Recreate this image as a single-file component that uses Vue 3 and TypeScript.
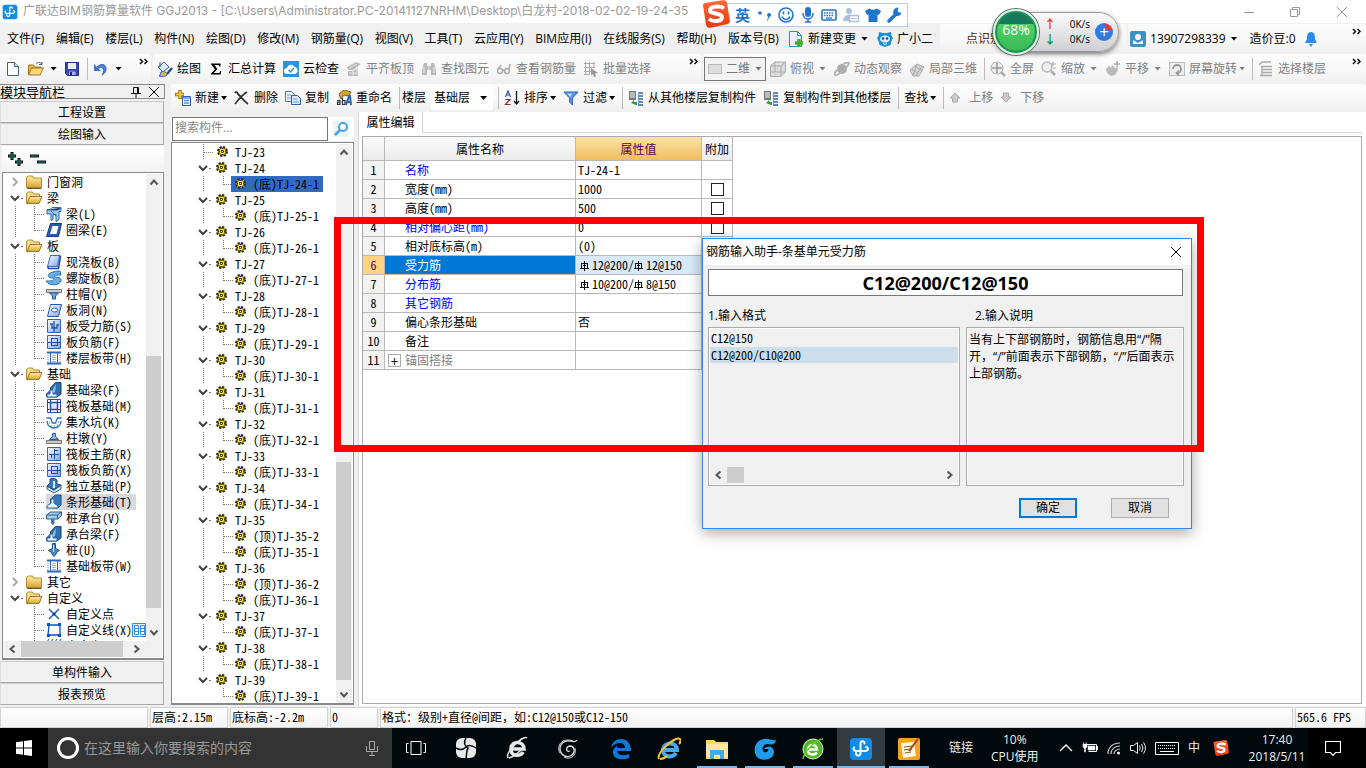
<script setup lang="ts">
import { h, ref } from 'vue'

interface Tool {
  icon?: string
  text?: string
  off?: boolean
  drop?: 'wide' | 'tight'
  sep?: boolean
}
interface NavRow {
  text: string
  guide: string
  icon: string
  branch?: string
  on?: boolean
}
interface PropRow {
  name: string
  value: string
  link?: boolean
  extra?: boolean
}

const Ic = (p: { n: string }) =>
  h('svg', { class: 'ic', 'aria-hidden': 'true' }, [h('use', { href: '#i-' + p.n })])
Ic.props = ['n']

const menus = ['文件(F)', '编辑(E)', '楼层(L)', '构件(N)', '绘图(D)', '修改(M)', '钢筋量(Q)', '视图(V)', '工具(T)', '云应用(Y)', 'BIM应用(I)', '在线服务(S)', '帮助(H)', '版本号(B)']

const editTools: Tool[] = [
  { icon: 'draw', text: '绘图' },
  { icon: 'sum', text: '汇总计算' },
  { icon: 'cloud', text: '云检查' },
  { icon: 'align', text: '平齐板顶', off: true },
  { icon: 'find', text: '查找图元', off: true },
  { icon: 'glasses', text: '查看钢筋量', off: true },
  { icon: 'batch', text: '批量选择', off: true },
]
const viewTools: Tool[] = [
  { icon: 'cube', text: '俯视', off: true, drop: 'wide' },
  { icon: 'orbit', text: '动态观察', off: true },
  { icon: 'part', text: '局部三维', off: true },
  { sep: true },
  { icon: 'full', text: '全屏', off: true },
  { icon: 'zoom', text: '缩放', off: true, drop: 'wide' },
  { icon: 'pan', text: '平移', off: true, drop: 'wide' },
  { icon: 'rotate', text: '屏幕旋转', off: true, drop: 'tight' },
  { sep: true },
  { icon: 'floors', text: '选择楼层', off: true },
]
const partTools: Tool[] = [
  { icon: 'create', text: '新建', drop: 'tight' },
  { icon: 'delete', text: '删除' },
  { icon: 'copy', text: '复制' },
  { icon: 'rename', text: '重命名' },
  { sep: true },
]
const partTools2: Tool[] = [
  { sep: true },
  { icon: 'sort', text: '排序', drop: 'tight' },
  { icon: 'filter', text: '过滤', drop: 'tight' },
  { sep: true },
  { icon: 'from', text: '从其他楼层复制构件' },
  { icon: 'from', text: '复制构件到其他楼层' },
  { sep: true },
  { text: '查找', drop: 'tight' },
  { sep: true },
  { icon: 'up', text: '上移', off: true },
  { icon: 'down', text: '下移', off: true },
]

const group = (text: string, icon = 'open', guide = 'chev'): NavRow => ({ text, icon, guide })
const leaf = (text: string, icon: string, branch = 'tee', guide = 'line', on = false): NavRow => ({ text, icon, branch, guide, on })

const nav: NavRow[] = [
  group('门窗洞', 'folder', 'shut'),
  group('梁'),
  leaf('梁(L)', 'beam'),
  leaf('圈梁(E)', 'ring', 'elbow'),
  group('板'),
  leaf('现浇板(B)', 'slab'),
  leaf('螺旋板(B)', 'spiral'),
  leaf('柱帽(V)', 'cap'),
  leaf('板洞(N)', 'hole'),
  leaf('板受力筋(S)', 'rebarS'),
  leaf('板负筋(F)', 'rebarF'),
  leaf('楼层板带(H)', 'strip', 'elbow'),
  group('基础'),
  leaf('基础梁(F)', 'fbeam'),
  leaf('筏板基础(M)', 'raft'),
  leaf('集水坑(K)', 'pit'),
  leaf('柱墩(Y)', 'pier'),
  leaf('筏板主筋(R)', 'rebarR'),
  leaf('筏板负筋(X)', 'rebarF'),
  leaf('独立基础(P)', 'pad'),
  leaf('条形基础(T)', 'fstrip', 'tee', 'line', true),
  leaf('桩承台(V)', 'pilecap'),
  leaf('承台梁(F)', 'fbeam'),
  leaf('桩(U)', 'pile'),
  leaf('基础板带(W)', 'strip', 'elbow'),
  group('其它', 'folder', 'shut'),
  group('自定义'),
  leaf('自定义点', 'point', 'tee', 'none'),
  leaf('自定义线(X)', 'poly', 'tee', 'none'),
  leaf('自定义面', 'area', 'tee', 'none'),
]

const parts: NavRow[] = [{ text: 'TJ-23', icon: 'gear', guide: 'tee' }]
for (let n = 24; n <= 39; n++) {
  parts.push({ text: `TJ-${n}`, icon: 'gear', guide: 'chev' })
  const trunk = n === 39 ? 'none' : 'line'
  if (n === 35 || n === 36) parts.push(leaf(`(顶)TJ-${n}-2`, 'gear', 'tee', trunk))
  parts.push(leaf(`(底)TJ-${n}-1`, 'gear', 'elbow', trunk, n === 24))
}

const rows: PropRow[] = [
  { name: '名称', value: 'TJ-24-1', link: true },
  { name: '宽度(mm)', value: '1000', extra: true },
  { name: '高度(mm)', value: '500', extra: true },
  { name: '相对偏心距(mm)', value: '0', link: true, extra: true },
  { name: '相对底标高(m)', value: '(0)', extra: true },
  { name: '受力筋', value: 'C12@200/C12@150', link: true },
  { name: '分布筋', value: 'C10@200/C8@150', link: true },
  { name: '其它钢筋', value: '', link: true },
  { name: '偏心条形基础', value: '否' },
  { name: '备注', value: '' },
  { name: '锚固搭接', value: '' },
]
const pieces = (v: string) => v.split(/(C)/).filter(Boolean)

const current = ref('C12@200/C12@150')
const formats = ['C12@150', 'C12@200/C10@200']
const pinned = ['taskview', 'fan', 'ewhite', 'swirl']
const running = [
  { icon: 'edge', on: false, run: false },
  { icon: 'ie', on: false, run: false },
  { icon: 'explorer', on: false, run: true },
  { icon: 'gblue', on: false, run: true },
  { icon: 'egreen', on: false, run: true },
  { icon: 'logo', on: true, run: true },
  { icon: 'note', on: false, run: true },
]
</script>

<template>
  <svg class="sprite" aria-hidden="true">
    <defs>
      <linearGradient id="gBlue" x1="0" y1="0" x2="1" y2="1"><stop offset="0" stop-color="#fff" /><stop offset="1" stop-color="#7aa4e6" /></linearGradient>
      <linearGradient id="gFold" x1="0" y1="0" x2="0" y2="1"><stop offset="0" stop-color="#fdeeb0" /><stop offset="1" stop-color="#dca22c" /></linearGradient>
      <linearGradient id="gRed" x1="0" y1="0" x2="0" y2="1"><stop offset="0" stop-color="#fa6a3c" /><stop offset="1" stop-color="#e8380d" /></linearGradient>
    </defs>
    <symbol id="i-none" viewBox="0 0 16 16"></symbol>
    <symbol id="i-line" viewBox="0 0 16 16"><path d="M8.500 0V16" stroke="#777" stroke-dasharray="1 1" /></symbol>
    <symbol id="i-chev" viewBox="0 0 16 16"><path d="M4 6l4 4 4-4" fill="none" stroke="#444" stroke-width="2" /><path d="M14 8.500H16" stroke="#777" /></symbol>
    <symbol id="i-shut" viewBox="0 0 16 16"><path d="M6 4l4 4-4 4" fill="none" stroke="#aaa" stroke-width="2" /></symbol>
    <symbol id="i-tee" viewBox="0 0 24 16"><path d="M12.500 0V16M13 8.500H23" stroke="#777" stroke-dasharray="1 1" /></symbol>
    <symbol id="i-elbow" viewBox="0 0 24 16"><path d="M12.500 0V9M13 8.500H23" stroke="#777" stroke-dasharray="1 1" /></symbol>
    <symbol id="i-logo" viewBox="0 0 24 24"><rect x="1" y="1" width="22" height="22" rx="4" fill="#0f8ce8" /><path d="M15.500 6.500c0-3-4-3-4 0V16c0 4-5 3-4.500 0M5 10.500c-1.500 3 1 3.500 3 3.500h8c4 0 3.500-4 1-4" fill="none" stroke="#fff" stroke-width="2" stroke-linecap="round" /></symbol>
    <symbol id="i-new" viewBox="0 0 16 16"><path d="M2.500 1.500h7l4 4v9h-11z" fill="#fff" stroke="#44608c" /><path d="M9.500 1.500v4h4" fill="#cfdcef" stroke="#44608c" /></symbol>
    <symbol id="i-openf" viewBox="0 0 16 16"><path d="M.5 14V4h5l1.500 2h6v2" fill="#e8b84a" stroke="#9c7420" /><path d="M.5 14l3-7h12l-3.500 7z" fill="#ffd875" stroke="#9c7420" /><path d="M8 3c2-2 4-2 6 0m0-2v2.500h-3" fill="none" stroke="#557" /></symbol>
    <symbol id="i-save" viewBox="0 0 16 16"><path d="M1.500 1.500h13v13h-11l-2-2z" fill="#3b46b8" stroke="#23297c" /><path d="M4 2h8v6H4z" fill="#e7eefb" /><path d="M5 10.500h6.500V14H5z" fill="#aab4e8" /><path d="M6 11h2v3H6z" fill="#222a80" /></symbol>
    <symbol id="i-undo" viewBox="0 0 16 16"><path d="M4 6c5-5 10-2 9 3-.5 2.500-2 4-4 5 2-3 2.500-6-.5-7.500C7 6 6 7 5.500 8" fill="#4d80d4" stroke="#3467bd" /><path d="M1 3v7h7z" fill="#3f73cb" /></symbol>
    <symbol id="i-draw" viewBox="0 0 16 16"><path d="M1 6l6-5 5 5-6 5z" fill="#dfe9f5" stroke="#345b8c" /><path d="M3 1v5" stroke="#345b8c" /><path d="M15 7l-5 6" stroke="#274f88" stroke-width="2.500" /><path d="M4 11c3-1 6 0 6 3-2 2-5 2-8 1 2-1 1-3 2-4" fill="#e3b53a" stroke="#2f6ab2" /></symbol>
    <symbol id="i-sum" viewBox="0 0 16 16"><path d="M3 2.500h9.500v3h-1.200l-.6-1.500H6.500L9.300 8l-3.500 4h5.500l.9-2h1l-.6 3.500H3v-.8L7 8.200 3 3.300z" fill="#000" /></symbol>
    <symbol id="i-cloud" viewBox="0 0 16 16"><path d="M0 0h16v16H0z" fill="#2696dc" /><path d="M4 13a3 3 0 010-6 4 4 0 017.500-1A3.600 3.600 0 0112 13z" fill="#fff" /><path d="M5.500 9l2 2 3.500-4" stroke="#2696dc" fill="none" stroke-width="1.400" /></symbol>
    <symbol id="i-align" viewBox="0 0 16 16"><path d="M1 6l9-5 5 2-8 6H2zM2 10h5l5-3v8H2z" fill="#bbb" /><path d="M3 12h8M3 7l8-4M7 10v5M11 8v6" stroke="#e5e5e5" /></symbol>
    <symbol id="i-find" viewBox="0 0 16 16"><path d="M3 2h3v3h4V2h3l2 7v5h-5V9H6v5H1V9z" fill="#b9b9b9" /><path d="M3 6v6M13 6v6M8 5v4" stroke="#eee" /></symbol>
    <symbol id="i-glasses" viewBox="0 0 16 16"><g fill="none" stroke="#aaa" stroke-width="1.500"><circle cx="4" cy="10" r="2.500" /><circle cx="11" cy="10" r="2.500" /><path d="M6 9h3M2 8l3-4M13 9l1-6" /></g></symbol>
    <symbol id="i-batch" viewBox="0 0 16 16"><path d="M1 2.500h11M1 6.500h11M1 10.500h7M1 13.500h6M2.500 1v13M6.500 1v13M11 1v6" stroke="#aaa" /><path d="M8 7l7 5-3 .5 1 3-2 .5-1-3-2 1z" fill="#999" /></symbol>
    <symbol id="i-cube" viewBox="0 0 16 16"><path d="M.5 5L5 1h10.500v10L11 15.500H.5z" fill="#ddd" stroke="#aaa" /><path d="M.5 5H11v10.500M11 5l4.500-4M5 1v10H.5M5 11h10" stroke="#aaa" fill="none" /></symbol>
    <symbol id="i-orbit" viewBox="0 0 16 16"><circle cx="8" cy="8" r="5" fill="#aaa" /><path d="M1 14c2 2 14-9 14-12-3-1-6 1-6 1M1 14c-1-2 1-4 2-5" fill="none" stroke="#b5b5b5" stroke-width="2" /></symbol>
    <symbol id="i-part" viewBox="0 0 16 16"><path d="M1 9l7-6 7 3-5 9H4z" fill="#d5d5d5" stroke="#aaa" /><path d="M3 8l6 5M6 5l7 5M8 3L4 14M13 5l-6 10" stroke="#aaa" /></symbol>
    <symbol id="i-full" viewBox="0 0 16 16"><circle cx="7" cy="7" r="6" fill="#eee" stroke="#aaa" /><path d="M7 2v10M2 7h10" stroke="#999" stroke-width="1.500" /><path d="M11 11l4 4" stroke="#aaa" stroke-width="2.500" /></symbol>
    <symbol id="i-zoom" viewBox="0 0 16 16"><circle cx="6" cy="6" r="5" fill="#eee" stroke="#bbb" stroke-width="1.500" /><path d="M10 10l4 4" stroke="#aaa" stroke-width="2.500" /><path d="M12 1v4M10 3h5M12 7h3" stroke="#aaa" /></symbol>
    <symbol id="i-pan" viewBox="0 0 16 16"><path d="M1 8l3-3 2 2 1-3 3 3 2-1 1 3-3 5-4 1-4-3z" fill="#b9b9b9" /><path d="M12 0v6M9 3h6" stroke="#aaa" stroke-width="1.500" /></symbol>
    <symbol id="i-rotate" viewBox="0 0 16 16"><rect x=".5" y="1.500" width="15" height="13" fill="#eee" stroke="#bbb" /><path d="M4 8a4 4 0 114 4" fill="none" stroke="#999" stroke-width="1.800" /><path d="M10 9v6l-4-3z" fill="#999" /></symbol>
    <symbol id="i-floors" viewBox="0 0 16 16"><path d="M1 4l3-3h9M3 5.500h11M5 8.500h9M5 11.500h9M2 14.500h12M4 5v9" stroke="#aaa" stroke-width="1.500" fill="none" /></symbol>
    <symbol id="i-create" viewBox="0 0 16 16"><path d="M5 0v9M0 4.500h9" stroke="#9a7816" stroke-width="3.500" /><path d="M5 1v7M1 4.500h7.500" stroke="#ffd83c" stroke-width="1.600" /><path d="M7.500 6.500h8v9h-8z" fill="#fff" stroke="#2d5fb0" /><path d="M8 8h7M9 10.500h5M9 13h5" stroke="#5b8ad2" stroke-width="1.500" /></symbol>
    <symbol id="i-delete" viewBox="0 0 16 16"><path d="M1 3c1-2 2-1 3 1 3 3 6 7 10 10M13 2C8 5 4 10 1 14" fill="none" stroke="#333" stroke-width="1.800" /></symbol>
    <symbol id="i-copy" viewBox="0 0 16 16"><path d="M.5 1.500h6l3 3v7h-9z" fill="#eaf1fc" stroke="#4a78bf" /><path d="M6.500 5.500h6l3 3v6h-9z" fill="#dbe7fa" stroke="#2c5dae" /><path d="M2 5h4M2 8h4M8 9h4M8 12h6" stroke="#6c94d3" /></symbol>
    <symbol id="i-rename" viewBox="0 0 16 16"><path d="M3 4l5-4 7 2-2 4-5-1-3 4z" fill="#d8a22c" stroke="#76631f" /><path d="M1 10.500h3v4H1.500v-2.300H4M6.500 8v6.500H9v-4H6.500" fill="none" stroke="#333" stroke-width="1.200" /><path d="M10 15l3-9h1l1 9M11.500 12H15" stroke="#2964b5" fill="none" stroke-width="2" /></symbol>
    <symbol id="i-sort" viewBox="0 0 16 16"><path d="M1.500 7L4 1l2.500 6M2.500 5h3" fill="none" stroke="#33559b" stroke-width="1.200" /><path d="M1.500 9.500h4.500l-4.500 5h5" fill="none" stroke="#8e2b33" stroke-width="1.200" /><path d="M12.500 1v12M10 11l2.500 3 2.500-3" fill="none" stroke="#111" stroke-width="1.300" /></symbol>
    <symbol id="i-filter" viewBox="0 0 16 16"><path d="M1 2h14L9.500 8v7L6.500 12V8z" fill="#5d95e6" stroke="#2b62ba" /><path d="M4 3.500h5L7.500 7z" fill="#c7ddfa" /></symbol>
    <symbol id="i-from" viewBox="0 0 16 16"><path d="M1 1h7v9H1z" fill="#777" /><path d="M2 3h5M2 5h5M2 7h5" stroke="#fff" /><path d="M8 15l-5-2 3-3v2h3v3z" fill="#2f9e3b" /><path d="M10 3h5M10 6h5M10 9h5M10 12h5M10 15h5" stroke="#2f62a8" stroke-width="1.600" /><path d="M10.500 2v13" stroke="#6c9ad8" /></symbol>
    <symbol id="i-up" viewBox="0 0 16 16"><path d="M6 3l5 5H8.500v4h-5V8H1z" fill="#ccc" stroke="#aaa" /></symbol>
    <symbol id="i-down" viewBox="0 0 16 16"><path d="M6 12l5-5H8.500V3h-5v4H1z" fill="#ccc" stroke="#aaa" /></symbol>
    <symbol id="i-doc" viewBox="0 0 16 16"><path d="M1.500.5h8l4 4v11h-12z" fill="#eaf5fd" stroke="#3785c5" /><path d="M9.500.5v4h4" fill="none" stroke="#3785c5" /><path d="M11 8v8M7 12h8" stroke="#3fae2a" stroke-width="3.500" /></symbol>
    <symbol id="i-mascot" viewBox="0 0 16 16"><path d="M2 1l4 1h4l4-1 .5 4L16 7l-1.500 3-1 4-5.500 2-5.500-2-1-4L0 7l1.500-2z" fill="#1b8fd8" /><ellipse cx="8" cy="8" rx="5" ry="3.500" fill="#d9effc" /><circle cx="6" cy="7.500" r="1.200" fill="#124a7c" /><circle cx="10" cy="7.500" r="1.200" fill="#124a7c" /><path d="M6 12.500c1.500 1 2.500 1 4 0" stroke="#fff" fill="none" /></symbol>
    <symbol id="i-user" viewBox="0 0 16 16"><rect width="16" height="16" rx="2" fill="#3b93c4" /><circle cx="8" cy="6" r="3" fill="#fff" /><path d="M3 13V9l5 3 5-3v4z" fill="#fff" /></symbol>
    <symbol id="i-bell" viewBox="0 0 16 16"><path d="M8 1c4 0 4 4 4 7l2 4H2l2-4c0-3 0-7 4-7M6 13h4l-2 3z" fill="#2d8ceb" /></symbol>
    <symbol id="i-folder" viewBox="0 0 16 16"><path d="M.5 13.500v-10l2-1.500h4l1 2h8v9.500z" fill="url(#gFold)" stroke="#b58a2c" /><path d="M1 14.500h14.500" stroke="#555" /></symbol>
    <symbol id="i-open" viewBox="0 0 16 16"><path d="M.5 13.500v-10l2-1.500h4l1 2h6v3" fill="#f6dc8d" stroke="#b58a2c" /><path d="M1 13.500l3-7h12l-3 7z" fill="url(#gFold)" stroke="#a0771e" /></symbol>
    <symbol id="i-beam" viewBox="0 0 16 16"><path d="M1 3.500h3l2-2h9v4h-2v8l-3 2v-7H7v5l-2 1V8H1z" fill="#9cc8e8" stroke="#2b68a8" /><path d="M1 4h11l3-2M5 5l5 5" stroke="#2b68a8" /></symbol>
    <symbol id="i-ring" viewBox="0 0 16 16"><path d="M4.500 1.500h11l-3 13H.5z" fill="#2c5ca8" stroke="#173b80" /><path d="M6.500 4h6l-2 8H4z" fill="#fff" /></symbol>
    <symbol id="i-slab" viewBox="0 0 16 16"><path d="M4.500 1.500h9l-2 11H1.500z" fill="url(#gBlue)" stroke="#3867b4" /><path d="M13.500 1.500l1 1-2 12h-10l-1-2" fill="none" stroke="#1d4b9d" stroke-width="1.500" /></symbol>
    <symbol id="i-spiral" viewBox="0 0 16 16"><path d="M14 1c-7 0-14 3-11 6 2 2 5 0 5 2s-5 2-8 2c4 6 14 4 15 0 1-5-7-3-7-5 0-1 5-1 7-1z" fill="#69aee0" stroke="#2b74b4" /></symbol>
    <symbol id="i-cap" viewBox="0 0 16 16"><path d="M.5 3.500h15v3H.5z" fill="#ccc" stroke="#777" /><path d="M3.500 7h9l-3 3v3h-3v-3z" fill="#72a5df" stroke="#2459a5" /></symbol>
    <symbol id="i-hole" viewBox="0 0 16 16"><path d="M4.500 2.500h11l-3 12H1.500z" fill="url(#gBlue)" stroke="#2258b4" /><ellipse cx="8.500" cy="8" rx="3" ry="2" fill="#fff" stroke="#2258b4" /></symbol>
    <symbol id="i-rebarS" viewBox="0 0 16 16"><path d="M1.500 1.500h13v13h-13z" fill="url(#gBlue)" stroke="#2e63bb" /><path d="M4 6h2v4h5V7h2M8 3v11" stroke="#1b4fae" fill="none" stroke-width="1.300" /></symbol>
    <symbol id="i-rebarF" viewBox="0 0 16 16"><path d="M1.500 1.500h13v13h-13z" fill="url(#gBlue)" stroke="#2e63bb" /><path d="M2 8.500h12M5 4.500h7M5 11.500h7M5.500 4v8M11.500 4v8" stroke="#1b4fae" /></symbol>
    <symbol id="i-rebarR" viewBox="0 0 16 16"><path d="M1.500 1.500h13v13h-13z" fill="url(#gBlue)" stroke="#2e63bb" /><path d="M3 8.500h10M5.500 8v4M8.500 3v10M8 4.500h4" stroke="#1b4fae" /></symbol>
    <symbol id="i-strip" viewBox="0 0 16 16"><path d="M1 2.500h14M1 13.500h14" stroke="#2d68c5" stroke-width="2" /><path d="M4.500 3v10M11.500 3v10" stroke="#2d68c5" /><path d="M2 5v7M7 5v7M9 5v7M14 5v7" stroke="#777" stroke-dasharray="1 1" /></symbol>
    <symbol id="i-fbeam" viewBox="0 0 16 16"><path d="M.5 15v-3l4-4V6l5-5.500H15V12l-4 3z" fill="#2f6fae" stroke="#183f78" /><path d="M1 12h3V8h3v4h4v3H1z" fill="#e3f0fa" stroke="#2b68a8" /><path d="M10 2L7 7v4l2-1z" fill="#8fc1e6" /></symbol>
    <symbol id="i-raft" viewBox="0 0 16 16"><path d="M1.500 1.500h13v13h-13z" fill="#fff" stroke="#204e9e" /><path d="M4.500 4.500h7v7h-7z" fill="#d7e6f8" stroke="#204e9e" stroke-width="1.500" /><path d="M1 4.500h14M1 11.500h14M4.500 1v14M11.500 1v14" stroke="#204e9e" /></symbol>
    <symbol id="i-pit" viewBox="0 0 16 16"><path d="M.5 4h4l2 5h3l2-5h4M1 7c0 4 3 7 7 7s7-3 7-7" fill="none" stroke="#2e72bd" stroke-width="1.300" /><path d="M3 9h1M5 12h1M8 12h1M11 11h1M12 8h1" stroke="#2e72bd" /></symbol>
    <symbol id="i-pier" viewBox="0 0 16 16"><path d="M6.500 3.500h3v3l3 3h-9l3-3z" fill="#87b5e7" stroke="#2459a5" /><path d="M.5 10.500h15v3H.5z" fill="#ccc" stroke="#777" /></symbol>
    <symbol id="i-pad" viewBox="0 0 16 16"><path d="M1 8l7 4 7-5v4l-7 4-7-4z" fill="#cfe2f2" stroke="#285d97" /><path d="M1 8l3-3v-4l4-1 3 2v4l4 1-7 5z" fill="#3a78b5" stroke="#1c4a80" /><path d="M8 3v7" stroke="#dcecf8" stroke-width="2" /></symbol>
    <symbol id="i-fstrip" viewBox="0 0 16 16"><path d="M.5 13.500l4-3V5l5-4H15v10l-3 3z" fill="#3a78b5" stroke="#1c4a80" /><path d="M1 14v-2l4-3V5h3v4l4 3v2z" fill="#eaf3fb" stroke="#2b68a8" /></symbol>
    <symbol id="i-pilecap" viewBox="0 0 16 16"><path d="M.5 5l4-3h11v4l-4 3H.5z" fill="#a9cbe8" stroke="#245c98" /><path d="M.5 5h11l4-3M11.500 5v4" stroke="#245c98" fill="none" /><path d="M5 9h3.500v4l-1.700 2.500L5 13z" fill="#3a78b5" /></symbol>
    <symbol id="i-pile" viewBox="0 0 16 16"><path d="M6.500 1.500h3v5l4 2-3 2v1l-2.500 3-2.500-3v-1l-3-2 4-2z" fill="#4c84c1" stroke="#1e4f8c" /><path d="M7.500 3v7" stroke="#d8e9f8" /></symbol>
    <symbol id="i-point" viewBox="0 0 16 16"><path d="M3 3l10 10M13 3L3 13" stroke="#2a5db5" stroke-width="1.500" /><circle cx="8" cy="8" r="1.500" fill="#0a3a9c" /></symbol>
    <symbol id="i-poly" viewBox="0 0 16 16"><path d="M3 3h11v10H2z" fill="none" stroke="#0a50c0" stroke-width="1.300" /><path d="M1 1h3v3H1zM12 1h3v3h-3zM1 12h3v3H1zM12 12h3v3h-3z" fill="#0a50c0" /></symbol>
    <symbol id="i-area" viewBox="0 0 16 16"><path d="M1 4l2-3M5 4l2-3M9 4l2-3M13 4l2-3" stroke="#0a50c0" /></symbol>
    <symbol id="i-gear" viewBox="0 0 16 16"><circle cx="7.500" cy="7.500" r="4.500" fill="#ffee10" stroke="#222" stroke-width="2" stroke-dasharray="2.200 1.334" /><circle cx="7.500" cy="7.500" r="3.500" fill="#ffee10" stroke="#4a4600" stroke-width=".8" /><path d="M7.500 4v7M4 7.500h7" stroke="#222" stroke-dasharray="1 1" /><rect x="6.500" y="6.500" width="2" height="2" fill="#fff" stroke="#222" stroke-width=".7" /></symbol>
    <symbol id="i-lens" viewBox="0 0 16 16"><circle cx="10" cy="6" r="4" fill="#fff" stroke="#4aa0e0" stroke-width="2" /><path d="M7 9l-5 5" stroke="#4aa0e0" stroke-width="2.500" /></symbol>
    <symbol id="i-pane" viewBox="0 0 14 16"><path d="M.5 1.500h13v13H.5z" fill="#e9f4ff" stroke="#2f8be6" /><path d="M2.500 3.500h4v9h-4zM8.500 3.500h4v9h-4z" fill="#fff" stroke="#2f8be6" /><path d="M3 6.500h3M3 9.500h3M9 6.500h3M9 9.500h3" stroke="#2f8be6" /></symbol>
    <symbol id="i-left" viewBox="0 0 16 16"><path d="M10.500 4.500l-4 3.500 4 3.500" fill="none" stroke="#555" stroke-width="2" /></symbol>
    <symbol id="i-right" viewBox="0 0 16 16"><path d="M5.500 4.500l4 3.500-4 3.500" fill="none" stroke="#555" stroke-width="2" /></symbol>
    <symbol id="i-top" viewBox="0 0 16 16"><path d="M4.500 10.500L8 6.500l3.500 4" fill="none" stroke="#555" stroke-width="2" /></symbol>
    <symbol id="i-bottom" viewBox="0 0 16 16"><path d="M4.500 5.500L8 9.500l3.500-4" fill="none" stroke="#555" stroke-width="2" /></symbol>
    <symbol id="i-rebar" viewBox="0 0 12 12"><path d="M4.500 1v10M1 3.500h7M1.500 3v5M7.500 3v5M0 8.500h9M3 5.500h3" fill="none" stroke="#111" /></symbol>
    <symbol id="i-x" viewBox="0 0 16 16"><path d="M3 3l10 10M13 3L3 13" stroke="currentColor" /></symbol>
    <symbol id="i-min" viewBox="0 0 16 16"><path d="M3 8.500h10" stroke="currentColor" /></symbol>
    <symbol id="i-restore" viewBox="0 0 16 16"><path d="M3.500 5.500h7v7h-7zM5.500 5.500v-2h7v7h-2" fill="none" stroke="currentColor" /></symbol>
    <symbol id="i-pin" viewBox="0 0 16 16"><path d="M5.500 9V3.500h5V9M9.500 3.500V9M3 9.500h10M8 10v4" fill="none" stroke="#111" /></symbol>
    <symbol id="i-more" viewBox="0 0 16 16"><path d="M4 5l2.500 2.500L4 10M8.500 5L11 7.500 8.500 10" fill="none" stroke="#111" stroke-width="1.500" /></symbol>
    <symbol id="i-sogou" viewBox="0 0 28 28"><path d="M1 5Q1 3 3 3L22 0Q24 0 25 3L28 21Q28 23 26 24L7 28Q5 28 4 25Z" fill="url(#gRed)" /><path d="M22 8C15 5 7 7 8 11c1 3 12 2 12 6 0 5-9 5-13 2" fill="none" stroke="#fff" stroke-width="4" /></symbol>
    <symbol id="i-comma" viewBox="0 0 16 16"><circle cx="4" cy="6" r="1.800" fill="#1f74cb" /><path d="M11 8a2 2 0 112 2c0 2-1 3-2 4 0-2 1-2 1-4z" fill="#1f74cb" /></symbol>
    <symbol id="i-smile" viewBox="0 0 16 16"><circle cx="8" cy="8" r="7" fill="#fff" stroke="#1f74cb" stroke-width="1.600" /><path d="M5.500 4.500v3M10.500 4.500v3M4 9.500c2 4 6 4 8 0" fill="none" stroke="#1f74cb" stroke-width="1.600" /></symbol>
    <symbol id="i-mic" viewBox="0 0 16 16"><rect x="5" y="0" width="6" height="10" rx="3" fill="#1f74cb" /><path d="M3 6c0 8 10 8 10 0M8 12v3M5 15h6" fill="none" stroke="#1f74cb" stroke-width="1.500" /></symbol>
    <symbol id="i-keys" viewBox="0 0 16 16"><rect x="1" y="3" width="14" height="10" rx="1" fill="#fff" stroke="#1f74cb" stroke-width="1.600" /><path d="M3 6h10M3 8.500h10" stroke="#1f74cb" stroke-width="1.500" stroke-dasharray="1.500 1" /><path d="M5 11h6" stroke="#1f74cb" stroke-width="1.300" /></symbol>
    <symbol id="i-person" viewBox="0 0 16 16"><circle cx="6" cy="4" r="3" fill="#a9bfdc" /><path d="M0 14c0-7 9-8 11-4v4z" fill="#a9bfdc" /><path d="M6.500 8.500h9v6h-9z" fill="#fff" stroke="#a9bfdc" stroke-width="1.500" /><path d="M8 11.500h6" stroke="#a9bfdc" /></symbol>
    <symbol id="i-shirt" viewBox="0 0 16 16"><path d="M4.500 1.500Q8 4 11.500 1.500L16 4l-2 4-1.500-.5V15h-9V7.500L2 8 0 4z" fill="#1f74cb" /></symbol>
    <symbol id="i-wrench" viewBox="0 0 16 16"><path d="M2 14l7-7" stroke="#1f74cb" stroke-width="3.500" stroke-linecap="round" /><path d="M14 6a4 4 0 01-6 2 4 4 0 013-7l-1 3 2 2z" fill="#1f74cb" stroke="#1f74cb" /></symbol>
    <symbol id="i-win" viewBox="0 0 16 16"><path d="M0 2.200L7 1.200V7.500H0zM8 1L16 0V7.500H8zM0 8.500H7V14.800L0 13.800zM8 8.500H16V16L8 15z" fill="#fff" /></symbol>
    <symbol id="i-taskview" viewBox="0 0 24 24"><path d="M7 5.500h10v13H7zM4.500 7.500h-2v9h2M19.500 7.500h2v9h-2" fill="none" stroke="#fff" /></symbol>
    <symbol id="i-fan" viewBox="0 0 24 24"><rect x="2" y="2" width="20" height="20" rx="6" fill="#e8e8e8" /><path d="M12 2c-3 5-1 8 2 10-2 3-1 7-2 10M2 12c5 3 8 1 10-1 3-3 7-1 10 1" fill="none" stroke="#01080b" stroke-width="1.500" /></symbol>
    <symbol id="i-ewhite" viewBox="0 0 24 24"><path d="M7 13h12c0-8-12-9-13-1-1 9 10 9 12 4" fill="none" stroke="#e8e8e8" stroke-width="3.500" /><path d="M3 22C0 16 18-1 22 2M4 22c4-1 8-4 12-8" fill="none" stroke="#e8e8e8" stroke-width="1.500" /></symbol>
    <symbol id="i-swirl" viewBox="0 0 24 24"><path d="M21 4c-2 3-4 1-7 1C8 4 4 8 4 13s5 9 10 7c6-2 5-10 0-10-5 1-4 7 0 5" fill="none" stroke="#ddd" stroke-width="1.300" /><path d="M17 5C6 1 0 10 4 17M19 12c2 9-6 12-11 9" fill="none" stroke="#ddd" /></symbol>
    <symbol id="i-edge" viewBox="0 0 24 24"><path d="M2 11C3 5 7 2 12 2c7 0 10 5 10 12H8c1 5 8 5 12 3v4C12 24 3 22 4 14c.5-3 3-5 6-6-2 1-2 2-2 3h8C16 4 6 5 2 11z" fill="#0a78d7" /></symbol>
    <symbol id="i-ie" viewBox="0 0 24 24"><path d="M8 13h12c0-8-12-9-14-1-1 9 10 9 13 4" fill="none" stroke="#48a9ec" stroke-width="4" /><path d="M2 22C-1 16 18-1 23 2c1 2 0 4-1 5M3 22c2 0 5-1 7-3" fill="none" stroke="#f5c431" stroke-width="2" /></symbol>
    <symbol id="i-explorer" viewBox="0 0 24 24"><path d="M1 3h8l2 2h12v17H1z" fill="#f8d775" /><path d="M1 7h22v13H1z" fill="#ffe79c" /><path d="M5 22v-9h14v9h-4v-4H9v4z" fill="#39aee8" /></symbol>
    <symbol id="i-gblue" viewBox="0 0 24 24"><path d="M23 3c-1 5-5 5-8 4-5 0-7 5-4 8 3 1 5-1 4-3h-4c4-5 10-2 10 3 0 8-12 10-17 5C-1 14 2 3 11 2c5-1 8 2 12 1z" fill="#219bea" /></symbol>
    <symbol id="i-egreen" viewBox="0 0 24 24"><circle cx="12" cy="12" r="10" fill="#51b728" stroke="#dff2cd" /><path d="M8 12.500h8c0-6-8-6-9 0-1 6 7 6 9 3" fill="none" stroke="#fff" stroke-width="2.500" /><path d="M2 22C3 14 16 2 22 2" fill="none" stroke="#5fd12f" stroke-width="1.500" /></symbol>
    <symbol id="i-note" viewBox="0 0 24 24"><rect x="1" y="1" width="22" height="22" rx="2" fill="#f7a41d" /><path d="M4 6l13-1 2 14-13 2z" fill="#fff8e0" /><path d="M7 10l8-1M7 13l8-1M8 16l6-1" stroke="#8a5a20" /><path d="M21 2l-9 12" stroke="#a34518" stroke-width="2" /></symbol>
    <symbol id="i-tup" viewBox="0 0 16 16"><path d="M2 11l6-6 6 6" fill="none" stroke="#fff" stroke-width="1.300" /></symbol>
    <symbol id="i-batt" viewBox="0 0 16 16"><path d="M4.500 4.500h10v7h-8" fill="none" stroke="#fff" /><path d="M6 6h7v4H6zM15 6.500h1v3h-1zM1 4h4v3L3.500 8.500V12H2.500V8.500L1 7zM1.500 2v2M4.500 2v2" fill="#fff" stroke="#fff" stroke-width=".5" /></symbol>
    <symbol id="i-wifi" viewBox="0 0 16 16"><g fill="none" stroke="#ccc" stroke-width="1.200"><path d="M2 14C2 7 7 3 14 3M5 14c0-5 4-8 9-8M8 14c0-3 3-5 6-5" /></g><circle cx="12.500" cy="13" r="1.500" fill="#fff" /></symbol>
    <symbol id="i-vol" viewBox="0 0 16 16"><path d="M.5 5.500h3l4-3v11l-4-3h-3zM9.500 5.500q1.500 2.500 0 5M11.500 4q3 4 0 8M13.500 2.500q4 5.500 0 11" fill="none" stroke="#eee" /></symbol>
    <symbol id="i-tkeys" viewBox="0 0 24 16"><path d="M.5 2.500h23v12H.5z" fill="none" stroke="#fff" /><path d="M3 5.500h18M3 8.500h18" stroke="#fff" stroke-dasharray="1 1" /><path d="M5 11.500h14" stroke="#fff" /></symbol>
    <symbol id="i-tip" viewBox="0 0 16 16"><path d="M.5 1.500h15v11h-5l-2.500 3-2.500-3h-5z" fill="none" stroke="#fff" stroke-width="1.200" /></symbol>
    <symbol id="i-tmic" viewBox="0 0 16 16"><path d="M5.500 1.500h5v8h-5zM2.500 6v5.500h11V6M8 12v3.500M5 15.500h6" fill="none" stroke="#aaa" /></symbol>
  </svg>

  <div class="desk">
    <header class="title">
      <Ic n="logo" />
      <span class="path">广联达BIM钢筋算量软件 GGJ2013 - [C:\Users\Administrator.PC-20141127NRHM\Desktop\白龙村-2018-02-02-19-24-35</span>
      <div class="winbtns">
        <button aria-label="最小化"><Ic n="min" /></button>
        <button aria-label="还原"><Ic n="restore" /></button>
        <button aria-label="关闭"><Ic n="x" /></button>
      </div>
    </header>

    <nav class="menu">
      <div class="menus"><button v-for="m in menus" :key="m">{{ m }}</button></div>
      <button class="tool"><Ic n="doc" />新建变更<i class="dd wide"></i></button>
      <button class="tool"><Ic n="mascot" />广小二</button>
      <div class="strip hint"><button>点识别</button></div>
      <div class="strip account">
        <button class="tool"><Ic n="user" />13907298339<i class="dd wide"></i></button>
        <button>造价豆:0</button>
        <button aria-label="通知"><Ic n="bell" /></button>
        <button class="more" aria-label="更多"><Ic n="more" /></button>
      </div>
    </nav>

    <div class="bars">
      <div class="strip files">
        <button aria-label="新建"><Ic n="new" /></button>
        <button class="tool" aria-label="打开"><Ic n="openf" /><i class="dd"></i></button>
        <button aria-label="保存"><Ic n="save" /></button>
        <i class="sep"></i>
        <button class="tool" aria-label="撤销"><Ic n="undo" /><i class="dd"></i></button>
        <button class="more" aria-label="更多"><Ic n="more" /></button>
      </div>
      <div class="strip edit">
        <button v-for="t in editTools" :key="t.text" class="tool" :class="{ off: t.off }"><Ic :n="t.icon!" />{{ t.text }}</button>
        <button class="more" aria-label="更多"><Ic n="more" /></button>
      </div>
      <div class="strip view">
        <label class="mode"><i class="swatch"></i><select aria-label="视图模式"><option>二维</option></select><i class="dd"></i></label>
        <template v-for="(t, i) in viewTools" :key="i">
          <i v-if="t.sep" class="sep"></i>
          <button v-else class="tool off"><Ic :n="t.icon!" />{{ t.text }}<i v-if="t.drop" class="dd" :class="t.drop"></i></button>
        </template>
        <button class="more" aria-label="更多"><Ic n="more" /></button>
      </div>
    </div>

    <div class="body">
      <aside class="side">
        <div class="sidehead"><span>模块导航栏</span><button aria-label="固定"><Ic n="pin" /></button><button aria-label="关闭"><Ic n="x" /></button></div>
        <button class="section">工程设置</button>
        <button class="section">绘图输入</button>
        <div class="navbox">
          <div class="fold">
            <button aria-label="全部展开"><svg class="sign"><path d="M1 5h8M5 1v8M8 11h8M12 7v8" stroke="#111" stroke-width="3" /><path d="M2 5h6M5 2v6M9 11h6M12 8v6" stroke="#0b8b7b" /></svg></button>
            <button aria-label="全部折叠"><svg class="sign"><path d="M0 5h9M7 11h9" stroke="#111" stroke-width="3" /><path d="M1 5h7M8 11h7" stroke="#0b8b7b" /></svg></button>
          </div>
          <div class="navtree">
            <div class="view-area">
              <ul class="tree">
                <li v-for="r in nav" :key="r.text + r.icon">
                  <Ic :n="r.guide" />
                  <Ic v-if="r.branch" :n="r.branch" class="branch" />
                  <span class="node" :class="{ on: r.on, kid: r.branch }"><Ic :n="r.icon" />{{ r.text }}</span>
                  <Ic v-if="r.icon === 'poly'" n="pane" class="pane" />
                </li>
              </ul>
              <div class="vbar"><Ic n="top" /><i class="thumb"></i><Ic n="bottom" /></div>
            </div>
            <div class="hbar"><Ic n="left" /><i class="thumb"></i><Ic n="right" /></div>
          </div>
        </div>
        <button class="section">单构件输入</button>
        <button class="section">报表预览</button>
      </aside>

      <main class="main">
        <div class="strip parts">
          <template v-for="(t, i) in partTools" :key="i">
            <i v-if="t.sep" class="sep"></i>
            <button v-else class="tool"><Ic :n="t.icon!" />{{ t.text }}<i v-if="t.drop" class="dd" :class="t.drop"></i></button>
          </template>
          <label class="floor"><span>楼层</span><select><option>基础层</option></select><i class="dd"></i></label>
          <template v-for="(t, i) in partTools2" :key="i">
            <i v-if="t.sep" class="sep"></i>
            <button v-else class="tool" :class="{ off: t.off }"><Ic v-if="t.icon" :n="t.icon" />{{ t.text }}<i v-if="t.drop" class="dd" :class="t.drop"></i></button>
          </template>
        </div>
        <div class="work">
          <section class="partlist">
            <div class="search"><input type="text" placeholder="搜索构件..." aria-label="搜索构件" /><button aria-label="搜索"><Ic n="lens" /></button></div>
            <div class="view-area boxed">
              <ul class="tree deep">
                <li v-for="r in parts" :key="r.text">
                  <Ic :n="r.guide" :class="{ lone: r.guide === 'tee' }" />
                  <Ic v-if="r.branch" :n="r.branch" class="branch" />
                  <span class="node" :class="{ on: r.on, kid: r.branch }"><Ic :n="r.icon" />{{ r.text }}</span>
                </li>
              </ul>
              <div class="vbar"><Ic n="top" /><i class="thumb"></i><Ic n="bottom" /></div>
            </div>
          </section>
          <section class="props">
            <div class="tabs"><button class="tab">属性编辑</button></div>
            <div class="sheet">
              <table>
                <colgroup><col class="c1" /><col class="c2" /><col class="c3" /><col class="c4" /></colgroup>
                <thead><tr><th></th><th>属性名称</th><th class="hot">属性值</th><th>附加</th></tr></thead>
                <tbody>
                  <tr v-for="(r, i) in rows" :key="r.name" :class="{ cur: i === 5, grey: i === 10 }">
                    <th>{{ i + 1 }}</th>
                    <td class="name" :class="{ link: r.link }"><button v-if="i === 10" class="plus" aria-label="展开">+</button><span>{{ r.name }}</span></td>
                    <td class="val"><template v-for="(p, k) in pieces(r.value)" :key="k"><Ic v-if="p === 'C'" n="rebar" class="bar" /><span v-else>{{ p }}</span></template></td>
                    <td class="tick"><input v-if="r.extra" type="checkbox" :aria-label="r.name + ' 附加'" /></td>
                  </tr>
                </tbody>
              </table>
            </div>
          </section>
        </div>
      </main>
    </div>

    <footer class="status">
      <span class="s1"></span><span class="s2">层高:2.15m</span><span class="s3">底标高:-2.2m</span><span class="s4">0</span>
      <span class="s5">格式：级别+直径@间距，如:C12@150或C12-150</span><span class="s6">565.6 FPS</span>
    </footer>

    <div class="taskbar">
      <button class="start" aria-label="开始"><Ic n="win" /></button>
      <label class="cortana"><i class="ring"></i><input type="text" placeholder="在这里输入你要搜索的内容" aria-label="搜索" /><Ic n="tmic" /></label>
      <div class="pinned"><button v-for="p in pinned" :key="p" :aria-label="p"><Ic :n="p" /></button></div>
      <div class="running"><button v-for="p in running" :key="p.icon" :class="{ on: p.on, run: p.run }" :aria-label="p.icon"><Ic :n="p.icon" /></button></div>
      <span class="links">链接</span>
      <span class="cpu">10%<br />CPU使用</span>
      <div class="tray">
        <Ic n="tup" /><Ic n="batt" /><Ic n="wifi" /><Ic n="vol" /><Ic n="tkeys" class="wide" /><span>中</span><Ic n="sogou" />
      </div>
      <span class="clock">17:40<br />2018/5/11</span>
      <button class="notice" aria-label="通知中心"><Ic n="tip" /></button>
    </div>

    <div class="ime"><Ic n="sogou" class="big" /><b>英</b><Ic n="comma" /><Ic n="smile" /><Ic n="mic" /><Ic n="keys" /><Ic n="person" /><Ic n="shirt" /><Ic n="wrench" /></div>

    <div class="meter">
      <div class="ball">68%</div>
      <div class="rates"><span><i class="upr">↑</i>0K/s</span><span><i class="dnr">↓</i>0K/s</span></div>
      <button class="boost" aria-label="加速">+</button>
    </div>

    <form class="dialog" role="dialog" aria-label="钢筋输入助手" @submit.prevent>
      <div class="dtitle"><span>钢筋输入助手-条基单元受力筋</span><button type="button" aria-label="关闭"><Ic n="x" /></button></div>
      <input v-model="current" class="dinput" type="text" aria-label="钢筋信息" />
      <div class="dcols">
        <div class="dleft">
          <h2>1.输入格式</h2>
          <div class="dbox">
            <ul><li v-for="(f, i) in formats" :key="f" :class="{ on: i === 1 }">{{ f }}</li></ul>
            <div class="hbar"><Ic n="left" /><i class="thumb"></i><Ic n="right" /></div>
          </div>
        </div>
        <div class="dright">
          <h2>2.输入说明</h2>
          <p class="dbox">当有上下部钢筋时，钢筋信息用“/”隔开，“/”前面表示下部钢筋，“/”后面表示上部钢筋。</p>
        </div>
      </div>
      <div class="dfoot"><button class="ok">确定</button><button type="button">取消</button></div>
    </form>
    <div class="mark"></div>
  </div>
</template>

<style>
html, body { margin: 0; overflow: hidden; }
</style>

<style scoped>
* { box-sizing: border-box; }
.sprite { position: absolute; width: 0; height: 0; }
.desk { position: relative; display: flex; flex-direction: column; height: 100vh; overflow: hidden; background: #f0f0f0; color: #000; font: 12px/16px "Open Sans", "Noto Sans CJK SC", sans-serif; white-space: nowrap; }
button, input, select { font: inherit; color: inherit; border: 0; padding: 0; margin: 0; background: none; border-radius: 0; outline: 0; }
button { white-space: nowrap; }
select { appearance: none; }
ul { list-style: none; margin: 0; padding: 0; }
h2 { font: inherit; margin: 0; }
.ic { width: 16px; height: 16px; flex: none; display: block; }

.title { display: flex; align-items: center; height: 23px; flex: none; background: #fff; padding-left: 2px; gap: 5px; color: #999; }
.path { flex: 1; overflow: hidden; padding-bottom: 1px; font-family: Inter, "Noto Sans CJK SC", sans-serif; }
.winbtns { display: flex; height: 21px; }
.winbtns button { width: 46px; display: grid; place-items: center; }
.winbtns button:last-child { width: 48px; }

.menu { display: flex; align-items: center; height: 31px; flex: none; padding-left: 7px; }
.menus { display: flex; justify-content: space-between; width: 772px; margin-right: 9px; }
.tool { display: inline-flex; align-items: center; gap: 4px; flex: none; }
.menu > .tool { margin-right: 4px; }
.menu > .tool + .tool { margin-right: 7px; }
.dd { width: 7px; height: 4px; flex: none; background: currentColor; clip-path: polygon(0 0, 100% 0, 50% 100%); }
.dd.wide { margin: 0 5px 0 1px; }
.dd.tight { margin-left: -2px; width: 6px; }
.strip { display: flex; align-items: center; height: 29px; background: linear-gradient(#fcfcfc, #f7f7f7 60%, #efefef); border-radius: 2px; }
.more { margin-left: auto; align-self: flex-start; margin-right: 1px; }
.hint { width: 186px; padding-left: 26px; color: #5a2d0c; }
.account { flex: 1; margin-left: 2px; padding-left: 2px; gap: 7px; }

.bars { display: flex; height: 29px; flex: none; gap: 2px; }
.files { width: 151px; padding-left: 5px; gap: 7px; }
.files .more, .edit .more { margin-right: -1px; }
.sep { width: 1px; height: 22px; background: #bbb; margin-right: -2px; flex: none; }
.files .tool { gap: 6px; }
.edit { width: 548px; padding-left: 4px; gap: 7px; }
.view { flex: 1; padding-left: 1px; gap: 7px; }
.off { color: #808080; }
.view .dd.wide { margin: 0 1px 0 1px; }
.mode { display: flex; align-items: center; width: 62px; height: 24px; border: 1px solid #777; padding: 0 3px; gap: 4px; margin-right: -3px; color: #777; background: #f3f3f3; }
.mode select { flex: 1; min-width: 0; }
.swatch { width: 14px; height: 10px; background: #ddd; border: 1px solid #bbb; }

.body { display: flex; flex: 1; min-height: 0; gap: 6px; padding-top: 1px; }
.side { width: 165px; flex: none; display: flex; flex-direction: column; padding-bottom: 1px; }
.sidehead { display: flex; align-items: center; height: 15px; border: 1px solid #888; border-left: 0; margin-bottom: 2px; font-size: 13px; flex: none; }
.sidehead span { flex: 1; }
.sidehead button { margin-right: 2px; }
.section { height: 22px; flex: none; border: 1px solid #aaa; border-left-color: #ddd; border-top-color: #ccc; background: #f0f0f0; margin-right: 1px; padding-top: 1px; }
.navbox { flex: 1; min-height: 0; display: flex; flex-direction: column; padding: 1px 1px 1px 2px; }
.fold { height: 26px; flex: none; display: flex; align-items: center; gap: 7px; padding-left: 5px; background: linear-gradient(#fff, #f3f3f3); }
.sign { width: 16px; height: 16px; display: block; fill: none; }
.navtree { flex: 1; min-height: 0; display: flex; flex-direction: column; border: 1px solid #888; border-width: 1px 1px 2px; background: #fff; padding: 1px; }
.view-area { flex: 1; min-height: 0; display: flex; overflow: hidden; background: #fff; }
.tree { flex: 1; min-width: 0; overflow: hidden; font-family: "Noto Sans Mono CJK SC", "Noto Sans CJK SC", sans-serif; padding-left: 3px; }
.tree li { display: flex; height: 16px; }
.node { display: flex; gap: 5px; padding-left: 3px; }
.branch { width: 24px; margin-left: -1px; }
.node.kid { padding: 0 4px 0 0; gap: 4px; }
.node.on { background: #d9d9d9; }
.pane { width: 14px; margin-left: -4px; }
.deep { padding-left: 23px; }
.deep .lone { width: 24px; margin-left: -4px; }
.deep .lone + .node { padding-left: 0; gap: 4px; }
.deep .branch { margin: 0 -4px 0 0; }
.deep .node.kid { padding: 0 4px 0 2px; }
.deep .node.on { background: #316ac5; }
.vbar { width: 16px; flex: none; display: flex; flex-direction: column; background: #f0f0f0; }
.vbar .thumb { width: 15px; background: #cdcdcd; height: 54%; margin-top: auto; margin-bottom: 17px; }
.boxed .vbar .thumb { height: 39%; margin-bottom: 7px; }
.hbar { display: flex; height: 16px; flex: none; background: #f0f0f0; }
.navtree .hbar .thumb { width: 102px; margin: 0 6px 0 1px; background: #cdcdcd; }

.main { flex: 1; min-width: 0; display: flex; flex-direction: column; }
.parts { height: 28px; flex: none; padding-left: 4px; gap: 7px; }
.floor { display: flex; align-items: center; margin: 0 -2px 0 -3px; gap: 5px; }
.floor select { width: 62px; height: 24px; background: #fff; padding-left: 3px; }
.floor .dd { margin-left: -18px; margin-right: 6px; }
.work { flex: 1; min-height: 0; display: flex; gap: 4px; }
.partlist { width: 183px; flex: none; display: flex; flex-direction: column; padding: 5px 0 1px; }
.search { display: flex; height: 24px; flex: none; background: #fff; margin-bottom: 1px; }
.search input { width: 157px; border: 1px solid #777; padding: 0 2px 3px; margin-left: 1px; min-width: 0; }
.search input::placeholder { color: #888; opacity: 1; }
.search button { margin: 4px 5px; background: #e9f4fc; align-self: flex-start; }
.boxed { border: 1px solid #888; border-bottom-width: 2px; padding: 1px 1px 0 0; }
.props { flex: 1; min-width: 0; display: flex; flex-direction: column; background: #fff; border-left: 1px solid #d5d5d5; padding: 0 4px 2px 0; }
.tabs { display: flex; height: 21px; flex: none; border-bottom: 1px solid #d5d5d5; }
.tab { width: 64px; height: 21px; background: #fff; border-right: 1px solid #d5d5d5; }
.sheet { flex: 1; min-height: 0; margin: 3px 0 0 3px; border: 1px solid #aaa; background: #fff; }
table { border-collapse: separate; border-spacing: 0; table-layout: fixed; width: 370px; font-family: "Noto Sans Mono CJK SC", "Noto Sans CJK SC", sans-serif; }
.c1 { width: 22px; }
.c2 { width: 191px; }
.c3 { width: 126px; }
.c4 { width: 31px; }
th, td { border: solid #b8b8b8; border-width: 0 1px 1px 0; height: 19px; padding: 0; font-weight: normal; line-height: 16px; text-align: left; }
thead th { height: 24px; text-align: center; background: linear-gradient(#fafafa, #ececec); }
thead .hot { background: linear-gradient(#fbe3a9, #f0bd5d); color: #5a0057; }
tbody th { text-align: center; background: #f2f2f2; }
.name { padding-left: 20px; position: relative; }
.link { color: #00f; }
.grey .name { color: #808080; }
.plus { position: absolute; left: 3px; top: 3px; width: 13px; height: 13px; border: 1px solid #aaa; line-height: 10px; color: #111; font-size: 14px; }
.val { padding-left: 2px; }
.val span { display: inline-block; vertical-align: top; }
.bar { display: inline-block; width: 12px; height: 12px; margin-top: 3px; vertical-align: top; }
.bar:first-child { margin-left: 2px; }
.cur th { background: #ffd27f; color: #5a0057; }
.cur .name { background: #0078d7; color: #fff; }
.cur .val { background: #d9e9f7; }
.tick { text-align: center; }
.tick input { appearance: none; width: 13px; height: 13px; border: 1px solid #222; display: block; margin: 0 auto; background: #fff; }

.status { display: flex; gap: 2px; height: 22px; flex: none; padding-top: 1px; font-family: "Noto Sans Mono CJK SC", "Noto Sans CJK SC", sans-serif; }
.status span { border: 1px solid #d2d2d2; background: linear-gradient(#fff, #f3f3f3); padding: 1px; }
.s1 { width: 148px; }
.s2 { width: 78px; }
.s3 { width: 98px; }
.s4 { width: 48px; }
.s5 { flex: 1; }
.s6 { width: 71px; }

.taskbar { display: flex; align-items: center; height: 40px; flex: none; background: #01090c; color: #eee; }
.start { width: 48px; height: 40px; display: grid; place-items: center; background: #000; }
.cortana { display: flex; align-items: center; width: 344px; height: 40px; background: #333; padding: 0 12px 0 9px; }
.ring { width: 22px; height: 22px; border: 3px solid #fff; border-radius: 50%; margin-right: 5px; flex: none; }
.cortana input { flex: 1; min-width: 0; font-size: 14px; line-height: 20px; }
.cortana input::placeholder { color: #999; opacity: 1; }
.pinned, .running { display: flex; height: 40px; flex: none; }
.pinned button { width: 51px; display: grid; place-items: center; }
.pinned button:first-child { width: 48px; }
.running { margin-left: 4px; }
.running button { width: 48px; display: grid; place-items: center; border: solid transparent; border-width: 2px 4px 0; }
.running .run { box-shadow: inset 0 -2px #76b9ed; }
.running .on { background: #333c40; border-width: 2px 0 0; }
.pinned .ic, .running .ic { width: 24px; height: 24px; }
.links { margin-left: 16px; flex: none; }
.cpu, .clock { text-align: center; line-height: 17px; flex: none; }
.cpu { margin-left: 18px; }
.tray { display: flex; align-items: center; gap: 8px; margin-left: auto; }
.tray .wide { width: 24px; margin-left: 1px; }
.tray span { margin: 0 5px 0 1px; }
.clock { margin-left: 17px; width: 62px; font-size: 12px; }
.notice { width: 58px; height: 40px; display: grid; place-items: center; background: #000; padding-right: 8px; }

.ime { position: absolute; left: 712px; top: 3px; width: 196px; height: 24px; display: flex; align-items: center; justify-content: space-between; padding: 0 4px 0 22px; background: #fff; border: 1px solid #b9cbe0; color: #1f74cb; font-size: 15px; }
.big { position: absolute; left: -11px; top: -4px; width: 28px; height: 28px; }
.meter { position: absolute; left: 993px; top: 12px; width: 126px; height: 40px; display: flex; align-items: center; border: 1px solid #999; border-radius: 20px; background: linear-gradient(#fafafa, #d0d0d4); box-shadow: 0 2px 5px rgba(0, 0, 0, .5); font-size: 10px; line-height: 15px; }
.ball { width: 46px; height: 46px; margin-left: -1px; flex: none; border-radius: 50%; border: 2px solid #e2ebe5; background: linear-gradient(#17795a 0 30%, #4fd065 31%, #35b955); color: #fff; font-size: 14px; line-height: 38px; text-align: center; box-shadow: 0 0 0 1px #4e7561, inset 0 0 0 2px #169154; }
.rates { flex: 1; display: flex; flex-direction: column; padding-left: 5px; }
.rates span { display: flex; justify-content: space-between; }
.rates i { font-style: normal; font-weight: bold; font-size: 12px; }
.upr { color: #e8432b; }
.dnr { color: #18994a; }
.boost { width: 18px; height: 18px; margin: 0 5px 0 5px; border-radius: 50%; background: radial-gradient(circle at 85% 10%, #e03a3a 25%, #2f7be0 27%); color: #fff; font-size: 17px; line-height: 16px; }

.dialog { position: absolute; left: 702px; top: 238px; width: 490px; height: 291px; display: flex; flex-direction: column; background: #f0f0f0; border: 1px solid #2f8be6; box-shadow: 0 4px 14px rgba(0, 0, 0, .35); }
.dtitle { display: flex; align-items: center; justify-content: space-between; height: 26px; flex: none; background: #fff; padding: 0 7px 0 3px; }
.dinput { height: 27px; flex: none; margin: 4px 8px 0 5px; border: 1px solid #777; background: #fff; text-align: center; font: bold 18px/24px "Noto Sans", "Open Sans", sans-serif; }
.dcols { flex: 1; min-height: 0; display: flex; gap: 6px; padding: 12px 7px 0 5px; }
.dleft, .dright { display: flex; flex-direction: column; }
.dleft { width: 252px; }
.dright { flex: 1; }
.dright h2 { padding-left: 9px; }
.dbox { flex: 1; margin: 3px 0 0; border: 1px solid #aaa; box-shadow: inset 0 0 0 1px #fff; display: flex; flex-direction: column; padding: 2px 1px; min-height: 0; }
.dbox ul { flex: 1; font-family: "Noto Sans Mono CJK SC", "Noto Sans CJK SC", sans-serif; }
.dbox li { line-height: 16px; margin-bottom: 1px; padding-left: 1px; }
.dbox li.on { background: #ccdeec; }
.dbox .hbar .thumb { width: 17px; background: #cdcdcd; margin-right: auto; margin-left: 1px; }
p.dbox { display: block; white-space: normal; line-height: 17px; padding: 3px 8px 0 2px; }
.dfoot { display: flex; justify-content: flex-end; gap: 34px; padding: 12px 22px 10px 0; flex: none; }
.dfoot button { width: 58px; height: 20px; border: 1px solid #adadad; background: #e1e1e1; }
.dfoot .ok { border: 2px solid #0078d7; }
.mark { position: absolute; left: 334px; top: 217px; width: 870px; height: 235px; border: 7px solid #f00; pointer-events: none; }
</style>
